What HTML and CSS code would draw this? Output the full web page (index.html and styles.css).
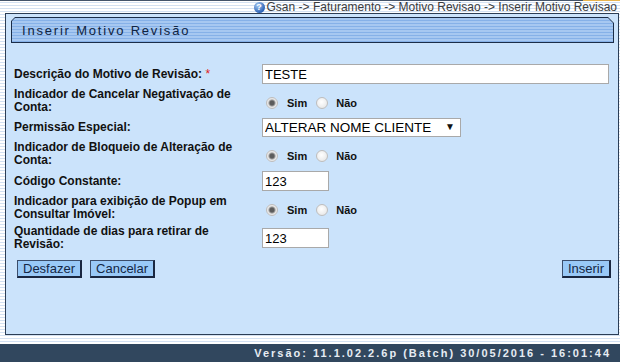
FILE: index.html
```html
<!DOCTYPE html>
<html lang="pt-BR">
<head>
  <meta charset="UTF-8" />
  <title>Inserir Motivo Revisão</title>
  <link rel="stylesheet" href="styles.css">
</head>
<body>
  <div class="topline"></div>
  <div class="crumbs">
    <span class="help">?</span>
    <span>Gsan -&gt; Faturamento -&gt; Motivo Revisao -&gt; Inserir Motivo Revisao</span>
  </div>

  <div class="panel">
    <div class="title-box">
      <div class="title">Inserir Motivo Revisão</div>
    </div>

    <table class="form">
      <tr>
        <td class="label">Descrição do Motivo de Revisão: <span class="req">*</span></td>
        <td><input type="text" class="field wide" value="TESTE"></td>
      </tr>
      <tr>
        <td class="label">Indicador de Cancelar Negativação de<br>Conta:</td>
        <td class="radios">
          <div class="opts">
            <label class="opt"><input type="radio" name="negativacao" checked>Sim</label>
            <label class="opt"><input type="radio" name="negativacao">Não</label>
          </div>
        </td>
      </tr>
      <tr>
        <td class="label">Permissão Especial:</td>
        <td>
          <div class="select">
            <select>
              <option>ALTERAR NOME CLIENTE</option>
            </select>
          </div>
        </td>
      </tr>
      <tr>
        <td class="label">Indicador de Bloqueio de Alteração de<br>Conta:</td>
        <td class="radios">
          <div class="opts">
            <label class="opt"><input type="radio" name="bloqueio" checked>Sim</label>
            <label class="opt"><input type="radio" name="bloqueio">Não</label>
          </div>
        </td>
      </tr>
      <tr>
        <td class="label">Código Constante:</td>
        <td><input type="text" class="field short" value="123"></td>
      </tr>
      <tr>
        <td class="label">Indicador para exibição de Popup em<br>Consultar Imóvel:</td>
        <td class="radios">
          <div class="opts">
            <label class="opt"><input type="radio" name="popup" checked>Sim</label>
            <label class="opt"><input type="radio" name="popup">Não</label>
          </div>
        </td>
      </tr>
      <tr>
        <td class="label">Quantidade de dias para retirar de<br>Revisão:</td>
        <td><input type="text" class="field short" value="123"></td>
      </tr>
    </table>

    <div class="actions">
      <div class="left-buttons">
        <button>Desfazer</button>
        <button>Cancelar</button>
      </div>
      <button>Inserir</button>
    </div>
  </div>

  <div class="footer">Versão: 11.1.02.2.6p (Batch) 30/05/2016 - 16:01:44</div>
</body>
</html>
```

FILE: styles.css
```css
body {
  margin: 0;
  height: 362px;
  overflow: hidden;
  font-family: "Liberation Sans", Arial, sans-serif;
  color: #000;
  background: repeating-linear-gradient(#ffffff 0 2px, #d3e1f2 2px 3px);
}

.topline {
  height: 1px;
  background: linear-gradient(to right, #44546a 94%, #e9b54f 94%);
}

.crumbs {
  height: 12px;
  display: flex;
  justify-content: flex-end;
  align-items: center;
  gap: 2px;
  padding-right: 3px;
  font-size: 12px;
  line-height: 12px;
  color: #3c3c3c;
  white-space: nowrap;
}

.help {
  width: 11px;
  height: 11px;
  border-radius: 50%;
  background: radial-gradient(circle at 35% 30%, #a8cbf4, #2d63b6 70%);
  color: #fff;
  font-size: 9px;
  font-weight: bold;
  line-height: 11px;
  text-align: center;
}

.panel {
  margin: 0 1px 0 5px;
  height: 322px;
  box-sizing: border-box;
  border: 1px solid #2b3d55;
  background: #cbe3fb;
}

/* chamfered title bar: dark outer shape + striped inner shape */
.title-box {
  margin: 3px 4px 0 5px;
  height: 26px;
  padding: 1px;
  box-sizing: border-box;
  background: #1b2d48;
  clip-path: polygon(4px 0, calc(100% - 6px) 0, 100% 6px, 100% 100%, 0 100%, 0 4px);
}

.title {
  height: 24px;
  padding-left: 10px;
  font-size: 13px;
  line-height: 25px;
  letter-spacing: 1.8px;
  color: #0f2442;
  background: repeating-linear-gradient(#a7c8f1 0 2px, #86b1e8 2px 3px);
  clip-path: polygon(3px 0, calc(100% - 5px) 0, 100% 5px, 100% 100%, 0 100%, 0 3px);
}

.form {
  margin: 19px 0 0 8px;
  border-collapse: collapse;
}

.form td {
  padding: 2px 0;
  vertical-align: middle;
}

.form .label {
  width: 248px;
  font-size: 12px;
  font-weight: bold;
  line-height: 13px;
  color: #111;
}

.req {
  color: #e02020;
  font-weight: normal;
}

.field {
  height: 20px;
  box-sizing: border-box;
  border: 1px solid #a9a9a9;
  padding: 0 2px;
  font-family: "Liberation Sans", Arial, sans-serif;
  font-size: 13px;
  color: #000;
  background: #fff;
  display: block;
}

.wide {
  width: 347px;
}

.short {
  width: 67px;
}

.radios {
  padding-top: 5px !important;
}

.opts {
  display: flex;
  align-items: center;
}

.opt {
  display: inline-flex;
  align-items: center;
  font-size: 11px;
  font-weight: bold;
  color: #111;
  margin-right: 9px;
}

.opt input {
  appearance: none;
  width: 12px;
  height: 12px;
  margin: 0 9px 0 4px;
  border: 1px solid #bdbdbd;
  border-radius: 50%;
  background: radial-gradient(circle at 45% 40%, #ffffff, #e2e2e2);
}

.opt + .opt input {
  margin-left: 0;
  margin-right: 8px;
}

.opt input:checked {
  background: radial-gradient(circle, #5c5c5c 0 2px, #9a9a9a 3px, #e4e4e4 4px, #f6f6f6 6px);
}

.select {
  position: relative;
  width: 199px;
}

.select select {
  appearance: none;
  width: 199px;
  height: 19px;
  box-sizing: border-box;
  border: 1px solid #a9a9a9;
  border-radius: 0;
  padding: 0 2px;
  background: #fff;
  font-family: "Liberation Sans", Arial, sans-serif;
  font-size: 13.5px;
  color: #000;
  display: block;
}

.select::after {
  content: "▼";
  position: absolute;
  right: 6px;
  top: 3px;
  font-size: 10px;
  color: #111;
  pointer-events: none;
}

.actions {
  display: flex;
  justify-content: space-between;
  align-items: center;
  margin: 7px 7px 0 11px;
}

.left-buttons {
  display: flex;
  gap: 8px;
}

button {
  height: 18px;
  padding: 0 5px;
  border-style: solid;
  border-width: 1px 2px 2px 1px;
  border-color: #3b4d6a #1a2740 #1a2740 #3b4d6a;
  background: #99c9f7;
  font-family: "Liberation Sans", Arial, sans-serif;
  font-size: 13px;
  line-height: 15px;
  color: #142745;
}

.footer {
  margin-top: 9px;
  height: 18px;
  padding-right: 9px;
  background: #31475e;
  color: #e6ecf3;
  text-align: right;
  font-size: 11px;
  font-weight: bold;
  line-height: 18px;
  letter-spacing: 2px;
}
```
